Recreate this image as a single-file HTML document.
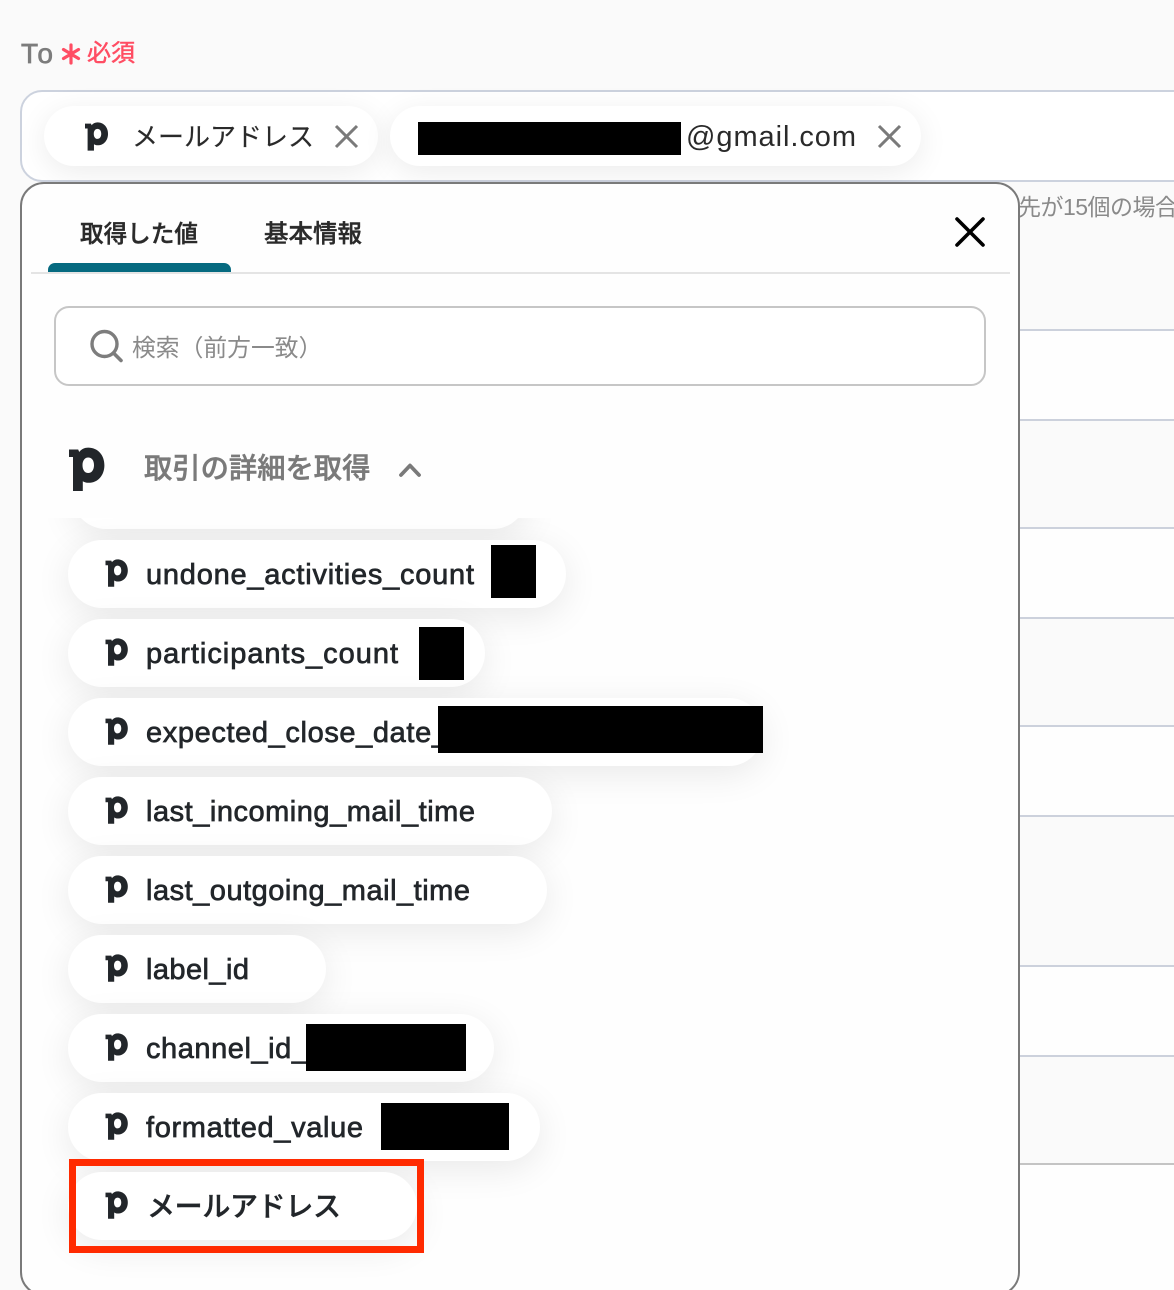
<!DOCTYPE html>
<html lang="ja"><head><meta charset="utf-8"><title>To</title>
<style>
html,body{margin:0;padding:0;height:1290px;overflow:hidden}
body{width:1174px;background:#fafafa;font-family:"Liberation Sans","Noto Sans CJK JP",sans-serif}
#root{position:relative;width:1174px;height:1290px;overflow:hidden;background:#fafafa}
.a{position:absolute;box-sizing:border-box}
.band{left:1000px;width:174px;background:#fefefe}
.ln{left:1000px;width:174px;height:2px;background:#ccd1dc}
.pill{position:absolute;left:68px;height:68px;border-radius:34px;background:#fff;box-shadow:0 8px 36px rgba(0,0,0,.085)}
.bl{position:absolute;background:#000}
svg{position:absolute;left:0;top:0;overflow:visible}
text{font-family:"Liberation Sans","Noto Sans CJK JP",sans-serif}
.t{font-size:29px;fill:#22262a;stroke:#22262a;stroke-width:.7px}
</style></head><body><div id="root">
<div class="a band" style="top:330px;height:90px"></div>
<div class="a band" style="top:528px;height:90px"></div>
<div class="a band" style="top:726px;height:90px"></div>
<div class="a band" style="top:966px;height:90px"></div>
<div class="a band" style="top:1164px;height:126px"></div>
<div class="a ln" style="top:329px"></div>
<div class="a ln" style="top:419px"></div>
<div class="a ln" style="top:527px"></div>
<div class="a ln" style="top:617px"></div>
<div class="a ln" style="top:725px"></div>
<div class="a ln" style="top:815px"></div>
<div class="a ln" style="top:965px"></div>
<div class="a ln" style="top:1055px"></div>
<div class="a ln" style="top:1163px;background:#c4c4c4"></div>

<svg width="1174" height="1290"><text x="1018" y="215" font-size="23" fill="#8a8a8a" textLength="160">先が15個の場合</text></svg>

<div class="a" style="left:20px;top:90px;width:1200px;height:92px;background:#fff;border:2px solid #ccd2de;border-radius:22px"></div>
<div class="pill" style="left:44px;top:106px;width:334px;height:60px;border-radius:30px;box-shadow:0 6px 30px rgba(0,0,0,.08)"></div>
<div class="pill" style="left:390px;top:106px;width:531px;height:60px;border-radius:30px;box-shadow:0 6px 30px rgba(0,0,0,.08)"></div>
<div class="bl" style="left:418px;top:122px;width:263px;height:33px"></div>

<div class="a" style="left:20px;top:182px;width:1000px;height:1114px;background:#fefefe;border:2px solid #7a7a7a;border-radius:24px"></div>
<div class="a" style="left:31px;top:272px;width:979px;height:2px;background:#e4e4e4"></div>
<div class="a" style="left:48px;top:263px;width:183px;height:9px;background:#066a80;border-radius:7px 7px 0 0"></div>
<div class="a" style="left:54px;top:306px;width:932px;height:80px;border:2px solid #c6c6c6;border-radius:15px;background:#fff"></div>

<div class="a" style="left:23px;top:518px;width:995px;height:772px;overflow:hidden">
  <div class="pill" style="left:49px;top:-57px;width:455px"></div>
  <div class="pill" style="left:45px;top:22px;width:498px"></div>
  <div class="pill" style="left:45px;top:101px;width:417px"></div>
  <div class="pill" style="left:45px;top:180px;width:695px"></div>
  <div class="pill" style="left:45px;top:259px;width:484px"></div>
  <div class="pill" style="left:45px;top:338px;width:479px"></div>
  <div class="pill" style="left:45px;top:417px;width:258px"></div>
  <div class="pill" style="left:45px;top:496px;width:426px"></div>
  <div class="pill" style="left:45px;top:575px;width:472px"></div>
  <div class="pill" style="left:45px;top:654px;width:349px"></div>
</div>

<svg width="1174" height="1290">
<defs>
<path id="p" fill-rule="evenodd" d="M0 2.500H9.200L10.200 5C12.400 2.200 15.500.6 19.200.6 28.800.6 35.400 8 35.400 18.200S28.800 35.800 19.600 35.800C17.200 35.800 15.200 35.200 13.800 34.200V44H4V10H0ZM19.200 10.500C15.800 10.500 13.500 13.500 13.500 18.200S15.800 26 19.200 26 25 23 25 18.100 22.600 10.500 19.200 10.500Z"/>
</defs>
<text x="21" y="63" font-size="28" fill="#7c7c7c" stroke="#7c7c7c" stroke-width=".7" textLength="32">To</text>
<g stroke="#ff4d63" stroke-width="3.200" stroke-linecap="round"><path d="M71 45V63M63.500 49.500L78.500 58.500M78.500 49.500L63.500 58.500"/></g>
<text x="87" y="61" font-size="24" fill="#ff4d63" stroke="#ff4d63" stroke-width=".5">必須</text>

<use href="#p" fill="#22262a" transform="translate(85 122) scale(.65)"/>
<text x="132" y="146" font-size="26" fill="#2a2a2a" stroke="#2a2a2a" stroke-width=".15" textLength="182">メールアドレス</text>
<path d="M336 126L357 147M357 126L336 147M879 126L900 147M900 126L879 147" stroke="#7a7a7a" stroke-width="3" fill="none"/>
<text x="686" y="146" font-size="29" fill="#2a2a2a" textLength="170">@gmail.com</text>

<text x="80" y="242" font-size="23.600" font-weight="500" fill="#2a2a2a" stroke="#2a2a2a" stroke-width=".4">取得した値</text>
<text x="264" y="242" font-size="24.500" font-weight="500" fill="#2a2a2a" stroke="#2a2a2a" stroke-width=".4">基本情報</text>
<path d="M957 219L983 245M983 219L957 245" stroke="#000" stroke-width="3.600" stroke-linecap="round" fill="none"/>

<circle cx="104.500" cy="344" r="12.500" fill="none" stroke="#7d7d7d" stroke-width="3.400"/>
<path d="M113.500 353L121 360.500" stroke="#7d7d7d" stroke-width="3.600" stroke-linecap="round"/>
<text x="132" y="356" font-size="23.800" fill="#8a8a8a">検索（前方一致）</text>

<use href="#p" fill="#22262a" transform="translate(69 447)"/>
<text x="144" y="478" font-size="28.300" font-weight="500" fill="#7a7a7a" stroke="#7a7a7a" stroke-width=".5">取引の詳細を取得</text>
<path d="M401 475L410 465.500L419 475" stroke="#7a7a7a" stroke-width="3.800" fill="none" stroke-linecap="round" stroke-linejoin="round"/>

<g fill="#22262a">
<use href="#p" transform="translate(105.500 559) scale(.63)"/>
<use href="#p" transform="translate(105.500 638) scale(.63)"/>
<use href="#p" transform="translate(105.500 717) scale(.63)"/>
<use href="#p" transform="translate(105.500 796) scale(.63)"/>
<use href="#p" transform="translate(105.500 875) scale(.63)"/>
<use href="#p" transform="translate(105.500 954) scale(.63)"/>
<use href="#p" transform="translate(105.500 1033) scale(.63)"/>
<use href="#p" transform="translate(105.500 1112) scale(.63)"/>
<use href="#p" transform="translate(105.500 1191) scale(.63)"/>
</g>
<text class="t" x="146" y="584" textLength="328">undone_activities_count</text>
<text class="t" x="146" y="663" textLength="252">participants_count</text>
<text class="t" x="146" y="742" textLength="302">expected_close_date_</text>
<text class="t" x="146" y="821" textLength="329">last_incoming_mail_time</text>
<text class="t" x="146" y="900" textLength="324">last_outgoing_mail_time</text>
<text class="t" x="146" y="979" textLength="103">label_id</text>
<text class="t" x="146" y="1058" textLength="162">channel_id_</text>
<text class="t" x="146" y="1137" textLength="217">formatted_value</text>
<text x="147" y="1216" font-size="28" font-weight="500" fill="#22262a" stroke="#22262a" stroke-width=".4" textLength="194">メールアドレス</text>
</svg>

<div class="bl" style="left:491px;top:545px;width:45px;height:53px"></div>
<div class="bl" style="left:419px;top:627px;width:45px;height:53px"></div>
<div class="bl" style="left:438px;top:706px;width:325px;height:47px"></div>
<div class="bl" style="left:306px;top:1024px;width:160px;height:47px"></div>
<div class="bl" style="left:381px;top:1103px;width:128px;height:47px"></div>
<div class="a" style="left:69px;top:1159px;width:355px;height:94px;border:7px solid #ff2a00"></div>
</div></body></html>
